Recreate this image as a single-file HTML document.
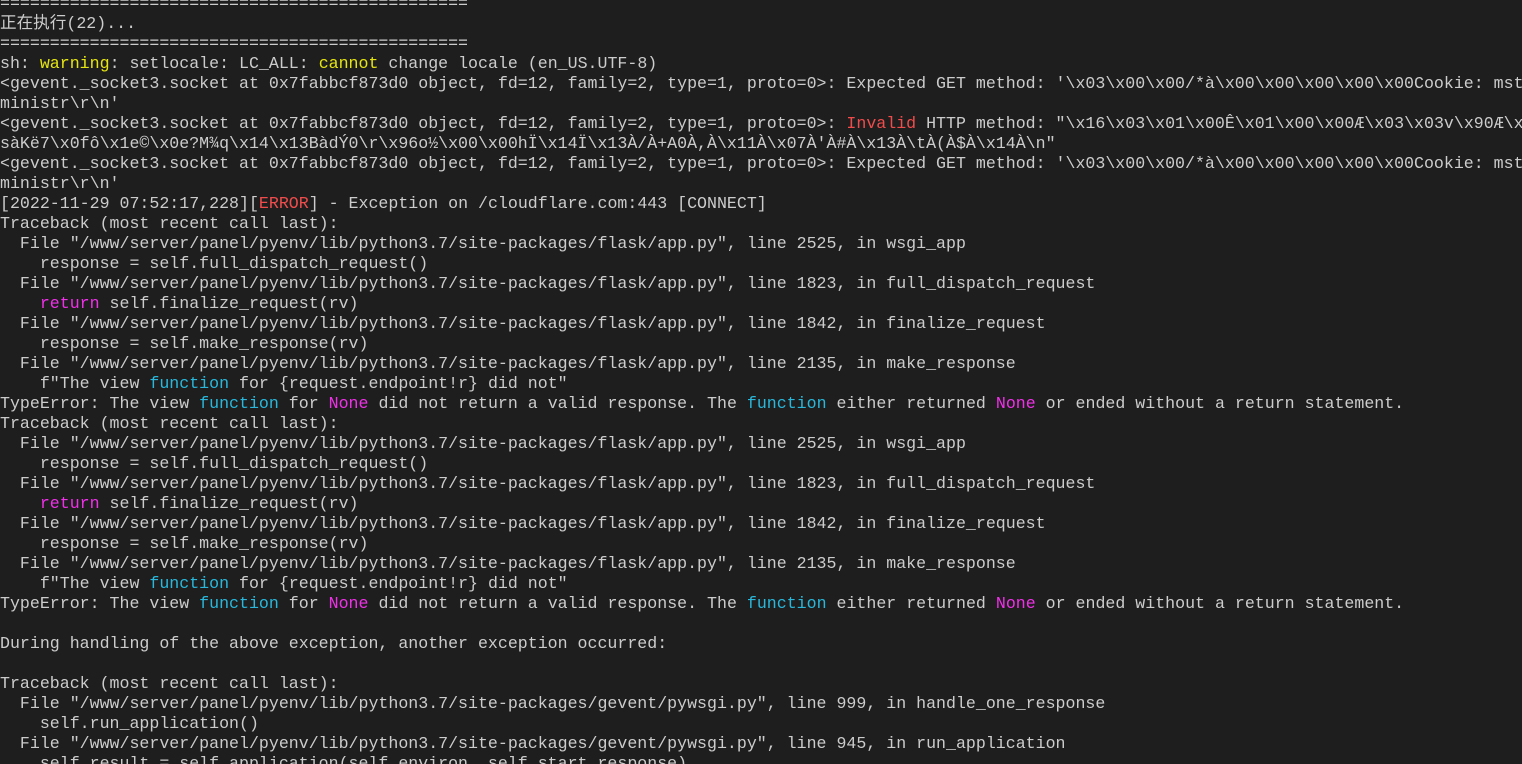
<!DOCTYPE html>
<html><head><meta charset="utf-8"><style>
html,body{margin:0;padding:0;background:#1e1e1e;width:1522px;height:757px;overflow:hidden}
pre{margin:0;position:absolute;left:0;top:-6px;width:1522px;height:770px;overflow:hidden;font-family:"Liberation Mono","Noto Sans CJK SC",monospace;font-size:16.6px;line-height:20px;color:#cccccc;white-space:pre}
.y{color:#e5e510}.r{color:#f14c4c}.c{color:#29b8db}.m{color:#f030e8}
</style></head><body><pre>===============================================
正在执行(22)...
===============================================
sh: <span class="y">warning</span>: setlocale: LC_ALL: <span class="y">cannot</span> change locale (en_US.UTF-8)
&lt;gevent._socket3.socket at 0x7fabbcf873d0 object, fd=12, family=2, type=1, proto=0&gt;: Expected GET method: '\x03\x00\x00/*à\x00\x00\x00\x00\x00Cookie: mstshash=Administr
ministr\r\n'
&lt;gevent._socket3.socket at 0x7fabbcf873d0 object, fd=12, family=2, type=1, proto=0&gt;: <span class="r">Invalid</span> HTTP method: "\x16\x03\x01\x00Ê\x01\x00\x00Æ\x03\x03v\x90Æ\x
sàKë7\x0fô\x1e©\x0e?M¾q\x14\x13BàdÝ0\r\x96o½\x00\x00hÏ\x14Ï\x13À/À+A0À,À\x11À\x07À'À#À\x13À\tÀ(À$À\x14À\n"
&lt;gevent._socket3.socket at 0x7fabbcf873d0 object, fd=12, family=2, type=1, proto=0&gt;: Expected GET method: '\x03\x00\x00/*à\x00\x00\x00\x00\x00Cookie: mstshash=Administr
ministr\r\n'
[2022-11-29 07:52:17,228][<span class="r">ERROR</span>] - Exception on /cloudflare.com:443 [CONNECT]
Traceback (most recent call last):
  File "/www/server/panel/pyenv/lib/python3.7/site-packages/flask/app.py", line 2525, in wsgi_app
    response = self.full_dispatch_request()
  File "/www/server/panel/pyenv/lib/python3.7/site-packages/flask/app.py", line 1823, in full_dispatch_request
    <span class="m">return</span> self.finalize_request(rv)
  File "/www/server/panel/pyenv/lib/python3.7/site-packages/flask/app.py", line 1842, in finalize_request
    response = self.make_response(rv)
  File "/www/server/panel/pyenv/lib/python3.7/site-packages/flask/app.py", line 2135, in make_response
    f"The view <span class="c">function</span> for {request.endpoint!r} did not"
TypeError: The view <span class="c">function</span> for <span class="m">None</span> did not return a valid response. The <span class="c">function</span> either returned <span class="m">None</span> or ended without a return statement.
Traceback (most recent call last):
  File "/www/server/panel/pyenv/lib/python3.7/site-packages/flask/app.py", line 2525, in wsgi_app
    response = self.full_dispatch_request()
  File "/www/server/panel/pyenv/lib/python3.7/site-packages/flask/app.py", line 1823, in full_dispatch_request
    <span class="m">return</span> self.finalize_request(rv)
  File "/www/server/panel/pyenv/lib/python3.7/site-packages/flask/app.py", line 1842, in finalize_request
    response = self.make_response(rv)
  File "/www/server/panel/pyenv/lib/python3.7/site-packages/flask/app.py", line 2135, in make_response
    f"The view <span class="c">function</span> for {request.endpoint!r} did not"
TypeError: The view <span class="c">function</span> for <span class="m">None</span> did not return a valid response. The <span class="c">function</span> either returned <span class="m">None</span> or ended without a return statement.

During handling of the above exception, another exception occurred:

Traceback (most recent call last):
  File "/www/server/panel/pyenv/lib/python3.7/site-packages/gevent/pywsgi.py", line 999, in handle_one_response
    self.run_application()
  File "/www/server/panel/pyenv/lib/python3.7/site-packages/gevent/pywsgi.py", line 945, in run_application
    self.result = self.application(self.environ, self.start_response)
</pre></body></html>
